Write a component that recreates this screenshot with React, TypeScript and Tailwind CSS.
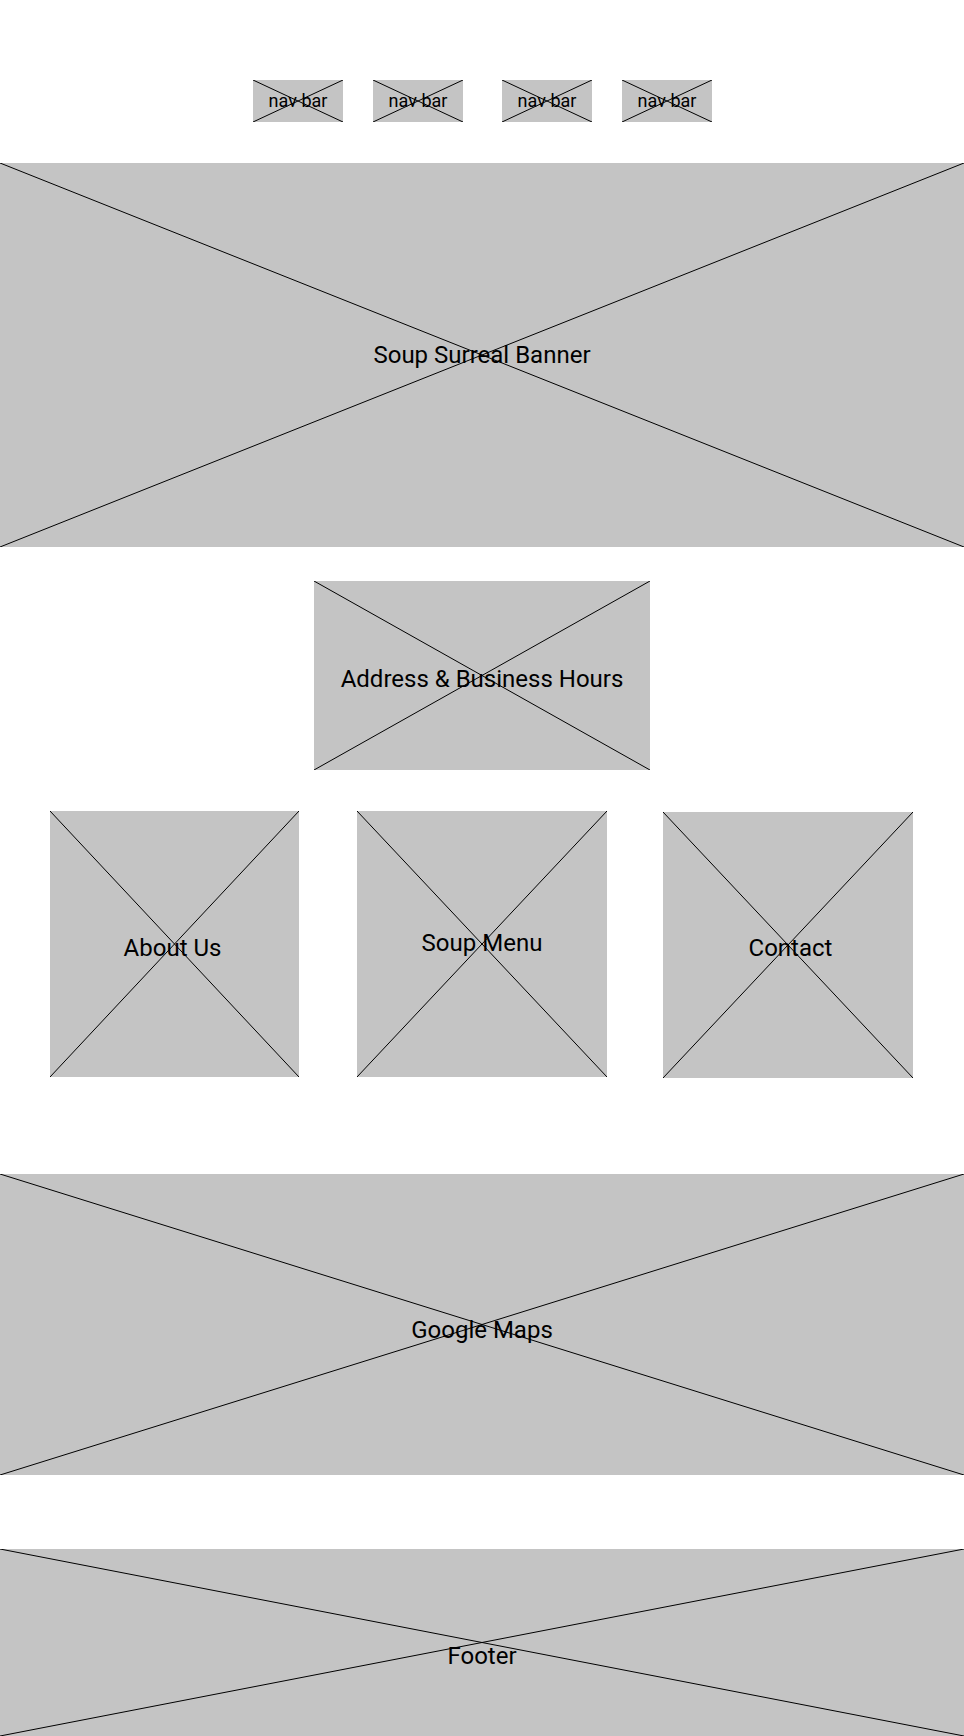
const font = { fontFamily: 'Roboto, "Liberation Sans", sans-serif' };

function Cross() {
  return (
    <svg
      className="absolute inset-0 h-full w-full"
      viewBox="0 0 100 100"
      preserveAspectRatio="none"
    >
      <line x1="0" y1="0" x2="100" y2="100" stroke="#000" strokeWidth="1" vectorEffect="non-scaling-stroke" />
      <line x1="100" y1="0" x2="0" y2="100" stroke="#000" strokeWidth="1" vectorEffect="non-scaling-stroke" />
    </svg>
  );
}

function Placeholder({
  label,
  className,
  textClass,
}: {
  label: string;
  className: string;
  textClass?: string;
}) {
  return (
    <div className={`relative flex items-center justify-center bg-[#c4c4c4] ${className}`}>
      <Cross />
      <span className={`relative whitespace-nowrap text-black ${textClass ?? 'text-[24px]'}`}>{label}</span>
    </div>
  );
}

export default function App() {
  return (
    <div className="w-[964px] bg-white" style={font}>
      <nav className="flex justify-center pt-[80px]">
        <div className="flex gap-[30px] pl-[1px]">
          <Placeholder label="nav bar" className="h-[42px] w-[90px]" textClass="text-[18px] leading-none" />
          <Placeholder label="nav bar" className="h-[42px] w-[90px]" textClass="text-[18px] leading-none" />
          <Placeholder label="nav bar" className="ml-[9px] h-[42px] w-[90px]" textClass="text-[18px] leading-none" />
          <Placeholder label="nav bar" className="h-[42px] w-[90px]" textClass="text-[18px] leading-none" />
        </div>
      </nav>

      <Placeholder label="Soup Surreal Banner" className="mt-[41px] h-[384px] w-full" />

      <div className="mt-[34px] flex justify-center">
        <Placeholder label="Address & Business Hours" className="h-[189px] w-[336px]" textClass="text-[24px] pt-[7px]" />
      </div>

      <div className="mt-[41px] flex items-start pl-[50px]">
        <Placeholder label="About Us" className="h-[266px] w-[249px]" textClass="text-[24px] pt-[7px] pr-[4px]" />
        <Placeholder label="Soup Menu" className="ml-[58px] h-[266px] w-[250px]" textClass="text-[24px] pb-[3px]" />
        <Placeholder label="Contact" className="ml-[56px] mt-[1px] h-[266px] w-[250px]" textClass="text-[24px] pt-[6px] pl-[5px]" />
      </div>

      <Placeholder label="Google Maps" className="mt-[96px] h-[301px] w-full" textClass="text-[24px] pt-[11px]" />

      <Placeholder label="Footer" className="mt-[74px] h-[187px] w-full" textClass="text-[24px] pt-[27px]" />
    </div>
  );
}
